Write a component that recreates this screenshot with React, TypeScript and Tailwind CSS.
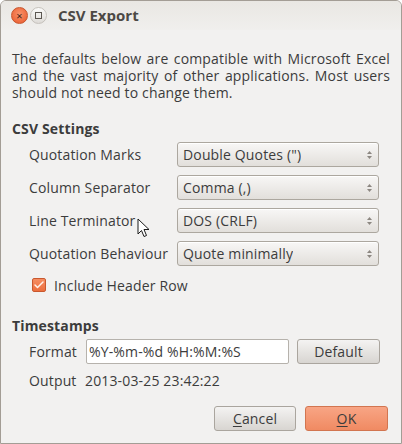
import { Check } from 'lucide-react';

const font = { fontFamily: '"Open Sans", "Noto Sans", sans-serif' };

function Combo({ value }: { value: string }) {
  return (
    <div className="flex h-[25px] w-[202px] items-center justify-between rounded-[3px] border border-[#aca79f] bg-gradient-to-b from-[#f8f7f6] to-[#e2dfdb] pl-[5px] pr-[5px] shadow-[inset_0_1px_0_#ffffff]">
      <span className="truncate">{value}</span>
      <svg width="7" height="12" viewBox="0 0 7 12" className="shrink-0">
        <path d="M3.5 2 L6 5 L1 5 Z" fill="#8c8781" />
        <path d="M3.5 10 L6 7 L1 7 Z" fill="#8c8781" />
      </svg>
    </div>
  );
}

function Row({ label, value }: { label: string; value: string }) {
  return (
    <div className="flex h-[25px] items-center">
      <span className="w-[165px] pl-[17px]">{label}</span>
      <Combo value={value} />
    </div>
  );
}

export default function App() {
  return (
    <div
      className="relative flex h-[444px] w-[402px] flex-col overflow-hidden rounded-t-[6px] border border-[#a39d95] bg-[#f2f1f0] text-[14px] tracking-[0.15px] text-[#3c3c3c]"
      style={font}
    >
      {/* title bar */}
      <div className="flex h-[29px] shrink-0 items-center bg-gradient-to-b from-[#e9e7e3] to-[#f0efed]">
        <div className="ml-[10px] flex h-[17px] w-[17px] items-center justify-center rounded-full border border-[#c7552c] bg-[radial-gradient(circle_at_50%_40%,#f8926a,#e9582a)] text-[11px] leading-none text-[#3d2418]">
          ×
        </div>
        <div className="ml-[2px] flex h-[17px] w-[17px] items-center justify-center rounded-full border border-[#c5c1bb] bg-gradient-to-b from-[#fbfbfa] to-[#dedbd7]">
          <div className="h-[7px] w-[7px] border border-[#5b5751]" />
        </div>
        <span className="ml-[11px] text-[15px] font-bold tracking-normal text-[#4c4945]">CSV Export</span>
      </div>

      <div className="flex flex-col px-[11px]">
        <p className="mt-[20px] text-justify leading-[17px]">
          The defaults below are compatible with Microsoft Excel and the vast majority of other
          applications. Most users should not need to change them.
        </p>

        <h2 className="mt-[19px] font-bold leading-[17px]">CSV Settings</h2>

        <div className="mt-[5px] flex flex-col gap-[8px]">
          <Row label="Quotation Marks" value='Double Quotes (")' />
          <Row label="Column Separator" value="Comma (,)" />
          <Row label="Line Terminator" value="DOS (CRLF)" />
          <Row label="Quotation Behaviour" value="Quote minimally" />
        </div>

        <div className="mt-[11px] flex h-[16px] items-center pl-[20px]">
          <div className="flex h-[14px] w-[14px] items-center justify-center rounded-[2px] border border-[#c9582e] bg-gradient-to-b from-[#f58d62] to-[#ec6e3d]">
            <Check size={12} strokeWidth={3} className="text-[#fff3ec]" />
          </div>
          <span className="ml-[8px]">Include Header Row</span>
        </div>

        <h2 className="mt-[24px] font-bold leading-[17px]">Timestamps</h2>

        <div className="mt-[5px] flex h-[25px] items-center">
          <span className="w-[74px] pl-[17px]">Format</span>
          <div className="flex h-[25px] w-[203px] items-center rounded-[2px] border border-[#b6b2ac] bg-white px-[2px]">
            %Y-%m-%d %H:%M:%S
          </div>
          <button className="ml-[8px] flex h-[25px] w-[83px] items-center justify-center rounded-[3px] border border-[#aaa59e] bg-gradient-to-b from-[#f4f3f2] to-[#d8d5d1] text-[#3c3c3c]">
            Default
          </button>
        </div>

        <div className="mt-[8px] flex h-[17px] items-center">
          <span className="w-[73px] pl-[17px]">Output</span>
          <span>2013-03-25 23:42:22</span>
        </div>

        <div className="mt-[17px] flex justify-end gap-[9px] pr-[2px]">
          <button className="flex h-[25px] w-[82px] items-center justify-center rounded-[3px] border border-[#aaa59e] bg-gradient-to-b from-[#f4f3f2] to-[#d8d5d1] text-[#3c3c3c]">
            <span className="underline decoration-1 underline-offset-2">C</span>ancel
          </button>
          <button className="flex h-[25px] w-[83px] items-center justify-center rounded-[3px] border border-[#d27550] bg-gradient-to-b from-[#f8a585] to-[#f08a62] text-[#3c3c3c]">
            <span className="underline decoration-1 underline-offset-2">O</span>K
          </button>
        </div>
      </div>

      {/* mouse pointer */}
      <svg
        width="13"
        height="20"
        viewBox="0 0 13 20"
        className="absolute left-[136px] top-[217px]"
      >
        <path
          d="M1 1 L1 16 L4.5 12.5 L7 18.5 L9.5 17.5 L7 11.5 L12 11.5 Z"
          fill="#ffffff"
          stroke="#1a1a1a"
          strokeWidth="1"
          strokeLinejoin="round"
        />
      </svg>
    </div>
  );
}
